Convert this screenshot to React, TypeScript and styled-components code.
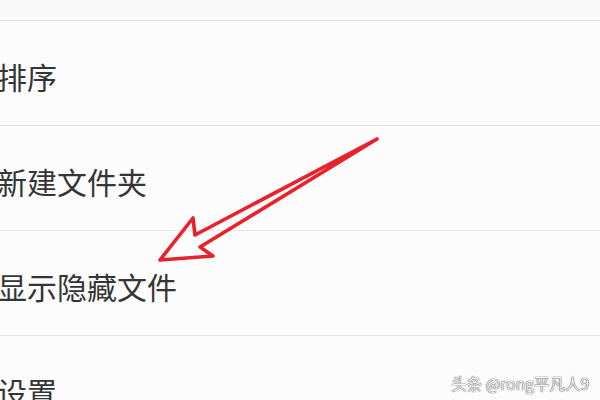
import React from "react";
import styled, { createGlobalStyle } from "styled-components";

const Global = createGlobalStyle`
  html, body { margin: 0; padding: 0; background: #fcfcfc; overflow: hidden; }
  body { font-family: "Noto Sans CJK SC", "Noto Sans", sans-serif; }
`;

const Page = styled.div`
  position: relative;
  width: 600px;
  height: 400px;
  overflow: hidden;
  background: #fcfcfc;
`;

const TopBand = styled.div`
  height: 20px;
  background: #f9f9f9;
  border-bottom: 1px solid #e4e4e4;
`;

const Row = styled.div`
  height: 104px;
  display: flex;
  align-items: center;
  border-bottom: 1px solid #e6e6e6;
`;

const Label = styled.span`
  margin-left: -3px;
  padding-top: 5px;
  font-size: 30px;
  line-height: 1;
  color: #353535;
  white-space: nowrap;
`;

const Overlay = styled.svg`
  position: absolute;
  left: 0;
  top: 0;
  pointer-events: none;
`;

const Watermark = styled.div`
  position: absolute;
  right: 11px;
  bottom: 9px;
  font-size: 15.5px;
  line-height: 1;
  color: #f5f5f5;
  text-shadow: 0 0 1px #444, 0 0 1px #444;
  white-space: nowrap;
`;

const items = ["排序", "新建文件夹", "显示隐藏文件", "设置"];

export default function App() {
  return (
    <Page>
      <Global />
      <TopBand />
      {items.map((t) => (
        <Row key={t}>
          <Label>{t}</Label>
        </Row>
      ))}
      <Overlay width="600" height="400" viewBox="0 0 600 400">
        <polygon
          points="160,260 193,218 195,235 377,139 200,247 213,256"
          fill="none"
          stroke="#e8212b"
          strokeWidth="3.6"
          strokeLinejoin="round"
        />
      </Overlay>
      <Watermark>头条 @rong平凡人9</Watermark>
    </Page>
  );
}
